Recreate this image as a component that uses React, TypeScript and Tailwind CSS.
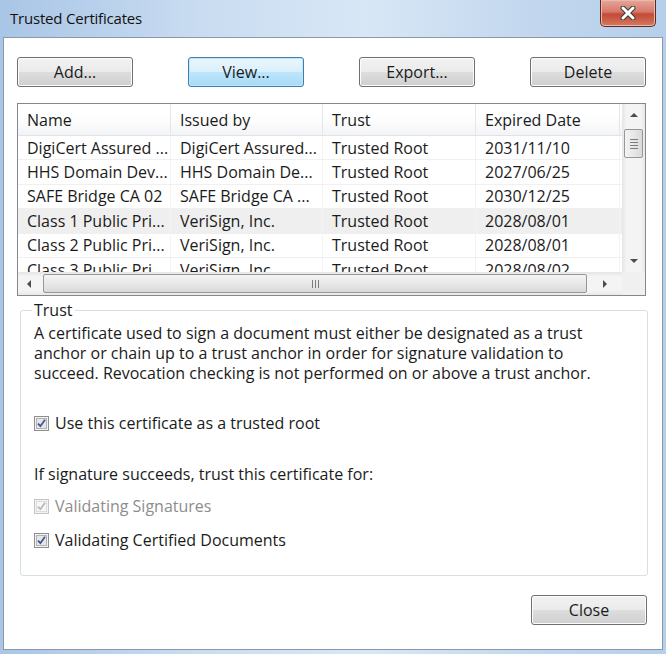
import { FC, ReactNode } from "react";

type Cert = {
    name: string;
    issuer: string;
    trust: string;
    expires: string;
    selected?: boolean;
};

const certs: Cert[] = [
    { name: "DigiCert Assured ...", issuer: "DigiCert Assured...", trust: "Trusted Root", expires: "2031/11/10" },
    { name: "HHS Domain Dev...", issuer: "HHS Domain De...", trust: "Trusted Root", expires: "2027/06/25" },
    { name: "SAFE Bridge CA 02", issuer: "SAFE Bridge CA ...", trust: "Trusted Root", expires: "2030/12/25" },
    { name: "Class 1 Public Pri...", issuer: "VeriSign, Inc.", trust: "Trusted Root", expires: "2028/08/01", selected: true },
    { name: "Class 2 Public Pri...", issuer: "VeriSign, Inc.", trust: "Trusted Root", expires: "2028/08/01" },
    { name: "Class 3 Public Pri...", issuer: "VeriSign, Inc.", trust: "Trusted Root", expires: "2028/08/02" },
];

const cols = ["w-[153px]", "w-[152px]", "w-[153px]", "w-[144px]"];

const WinButton: FC<{ children: ReactNode; focused?: boolean }> = ({ children, focused }) => (
    <button
        className={
            focused
                ? "w-[116px] h-[30px] rounded-[3px] border border-[#3c7fb1] shadow-[inset_0_0_0_1px_#c4e5f6] bg-[linear-gradient(#eaf6fd_0%,#d9f0fc_50%,#bee6fd_51%,#a7d9f5_100%)] text-[16px] text-[#1b1b1b]"
                : "w-[116px] h-[30px] rounded-[3px] border border-[#707070] shadow-[inset_0_0_0_1px_#fcfcfc] bg-[linear-gradient(#f2f2f2_0%,#ebebeb_50%,#dddddd_51%,#cfcfcf_100%)] text-[16px] text-[#1b1b1b]"
        }
    >
        {children}
    </button>
);

const CheckBox: FC<{ disabled?: boolean }> = ({ disabled }) => (
    <svg width="15" height="15" viewBox="0 0 15 15" className="shrink-0">
        <rect x="0.5" y="0.5" width="14" height="14" fill={disabled ? "#f4f4f4" : "#f2f2f2"} stroke={disabled ? "#c4c4c4" : "#8e8f8f"} />
        <rect x="2.5" y="2.5" width="10" height="10" fill={disabled ? "#f7f7f7" : "#e6e6e6"} stroke={disabled ? "#dcdcdc" : "#b3b3b3"} />
        <path
            d="M4 7.6 L6.4 10.2 L11 3.8"
            fill="none"
            stroke={disabled ? "#b9b9b9" : "#3e5794"}
            strokeWidth="1.8"
        />
    </svg>
);

const Arrow: FC<{ dir: "up" | "down" | "left" | "right" }> = ({ dir }) => {
    const pts = {
        up: "0,5 4,1 8,5",
        down: "0,1 4,5 8,1",
        left: "5,0 1,4 5,8",
        right: "1,0 5,4 1,8",
    }[dir];
    const size = dir === "up" || dir === "down" ? { w: 8, h: 6 } : { w: 6, h: 8 };
    return (
        <svg width={size.w} height={size.h} viewBox={`0 0 ${size.w} ${size.h}`}>
            <polygon points={pts} fill="#4d4d4d" />
        </svg>
    );
};

const App: FC = () => {
    return (
        <div
            className="w-[666px] h-[654px] flex flex-col bg-[linear-gradient(90deg,#a9c6e6_0%,#c9dcf1_30%,#d8e7f6_55%,#c2d7ee_80%,#b6cfea_100%)]"
            style={{ fontFamily: '"Open Sans", "Noto Sans", sans-serif' }}
        >
            {/* title bar */}
            <div className="h-[37px] flex items-start justify-between shrink-0">
                <span className="pl-[10px] pt-[7px] text-[15px] tracking-[-0.2px] text-[#111]">Trusted Certificates</span>
                <div className="mr-[10px] w-[56px] h-[27px] rounded-b-[5px] border border-t-0 border-[#5b2a22] bg-[linear-gradient(#e4a79c_0%,#d7796a_45%,#c34a35_55%,#d47a61_100%)] shadow-[inset_0_0_0_1px_#efb7a8] flex items-center justify-center">
                    <svg width="18" height="14" viewBox="0 0 18 14">
                        <path d="M4 2 L14 12 M14 2 L4 12" stroke="#3b3b3b" strokeWidth="5" strokeLinecap="round" />
                        <path d="M4 2 L14 12 M14 2 L4 12" stroke="#ffffff" strokeWidth="3" strokeLinecap="round" />
                    </svg>
                </div>
            </div>

            {/* client area */}
            <div className="flex-1 mx-[3px] mb-[4px] border border-[#8a98a8] bg-white flex flex-col text-[16px] text-[#1b1b1b]">
                <div className="mt-[19px] pl-[13px] flex gap-[55px]">
                    <WinButton>Add...</WinButton>
                    <WinButton focused>View...</WinButton>
                    <WinButton>Export...</WinButton>
                    <WinButton>Delete</WinButton>
                </div>

                {/* certificate list */}
                <div className="mt-[16px] ml-[13px] w-[629px] border border-[#828790] flex flex-col">
                    <div className="h-[168px] flex">
                        <div className="flex-1 overflow-hidden">
                            <div className="h-[32px] flex bg-[linear-gradient(#ffffff_0%,#ffffff_40%,#f3f4f6_100%)] border-b border-[#dfe2e6]">
                                {["Name", "Issued by", "Trust", "Expired Date"].map((h, i) => (
                                    <div key={h} className={`${cols[i]} shrink-0 pl-[9px] flex items-center border-r border-[#e4e6e8] text-[#1b1b1b]`}>
                                        {h}
                                    </div>
                                ))}
                            </div>
                            {certs.map((c) => (
                                <div
                                    key={c.name}
                                    className={`h-[24.4px] flex border-b border-[#f0f0f0] ${c.selected ? "bg-[#efefef]" : "bg-white"}`}
                                >
                                    {[c.name, c.issuer, c.trust, c.expires].map((v, i) => (
                                        <div key={i} className={`${cols[i]} shrink-0 pl-[9px] flex items-center border-r border-[#f3f3f3] whitespace-nowrap overflow-hidden`}>
                                            {v}
                                        </div>
                                    ))}
                                </div>
                            ))}
                        </div>
                        {/* vertical scrollbar */}
                        <div className="w-[23px] shrink-0 bg-[linear-gradient(90deg,#e5e5e5,#f4f4f4_20%,#f4f4f4_80%,#e8e8e8)] flex flex-col items-center">
                            <div className="h-[22px] flex items-center justify-center">
                                <Arrow dir="up" />
                            </div>
                            <div className="mt-[3px] w-[19px] h-[29px] rounded-[2px] border border-[#979797] bg-[linear-gradient(90deg,#f3f3f3,#e8e8e8_50%,#d9d9d9)] flex flex-col items-center justify-center gap-[2px]">
                                <div className="w-[8px] h-px bg-[#7c7c7c]" />
                                <div className="w-[8px] h-px bg-[#7c7c7c]" />
                                <div className="w-[8px] h-px bg-[#7c7c7c]" />
                                <div className="w-[8px] h-px bg-[#7c7c7c]" />
                            </div>
                            <div className="flex-1" />
                            <div className="h-[22px] flex items-center justify-center">
                                <Arrow dir="down" />
                            </div>
                        </div>
                    </div>
                    {/* horizontal scrollbar */}
                    <div className="h-[23px] flex">
                        <div className="flex-1 flex items-center bg-[linear-gradient(#e5e5e5,#f4f4f4_20%,#f4f4f4_80%,#e8e8e8)]">
                            <div className="w-[22px] flex items-center justify-center">
                                <Arrow dir="left" />
                            </div>
                            <div className="ml-[3px] w-[544px] h-[19px] rounded-[2px] border border-[#979797] bg-[linear-gradient(#f3f3f3,#e8e8e8_50%,#d9d9d9)] flex items-center justify-center gap-[2px]">
                                <div className="w-px h-[8px] bg-[#7c7c7c]" />
                                <div className="w-px h-[8px] bg-[#7c7c7c]" />
                                <div className="w-px h-[8px] bg-[#7c7c7c]" />
                            </div>
                            <div className="flex-1 flex items-center justify-center">
                                <Arrow dir="right" />
                            </div>
                        </div>
                        <div className="w-[23px] bg-[#f0f0f0]" />
                    </div>
                </div>

                {/* trust group */}
                <fieldset className="mt-[4px] ml-[16px] w-[628px] border border-[#d5dfe5] rounded-[3px] pl-[11px] pr-[10px] pb-[25px]">
                    <legend className="px-[2px] leading-[20px]">Trust</legend>
                    <p className="mt-[3px] leading-[20px] pl-[2px] w-[592px]">
                        A certificate used to sign a document must either be designated as a trust anchor or chain up to a trust anchor in order for signature validation to succeed. Revocation checking is not performed on or above a trust anchor.
                    </p>
                    <label className="mt-[30px] h-[20px] flex items-center gap-[6px] pl-[2px]">
                        <CheckBox />
                        <span>Use this certificate as a trusted root</span>
                    </label>
                    <p className="mt-[31px] h-[20px] leading-[20px] pl-[2px]">If signature succeeds, trust this certificate for:</p>
                    <label className="mt-[12px] h-[20px] flex items-center gap-[6px] pl-[2px]">
                        <CheckBox disabled />
                        <span className="text-[#8d8d8d]">Validating Signatures</span>
                    </label>
                    <label className="mt-[14px] h-[20px] flex items-center gap-[6px] pl-[2px]">
                        <CheckBox />
                        <span>Validating Certified Documents</span>
                    </label>
                </fieldset>

                <div className="mt-[19px] flex justify-end pr-[15px]">
                    <WinButton>Close</WinButton>
                </div>
            </div>
        </div>
    );
};

export default App;
